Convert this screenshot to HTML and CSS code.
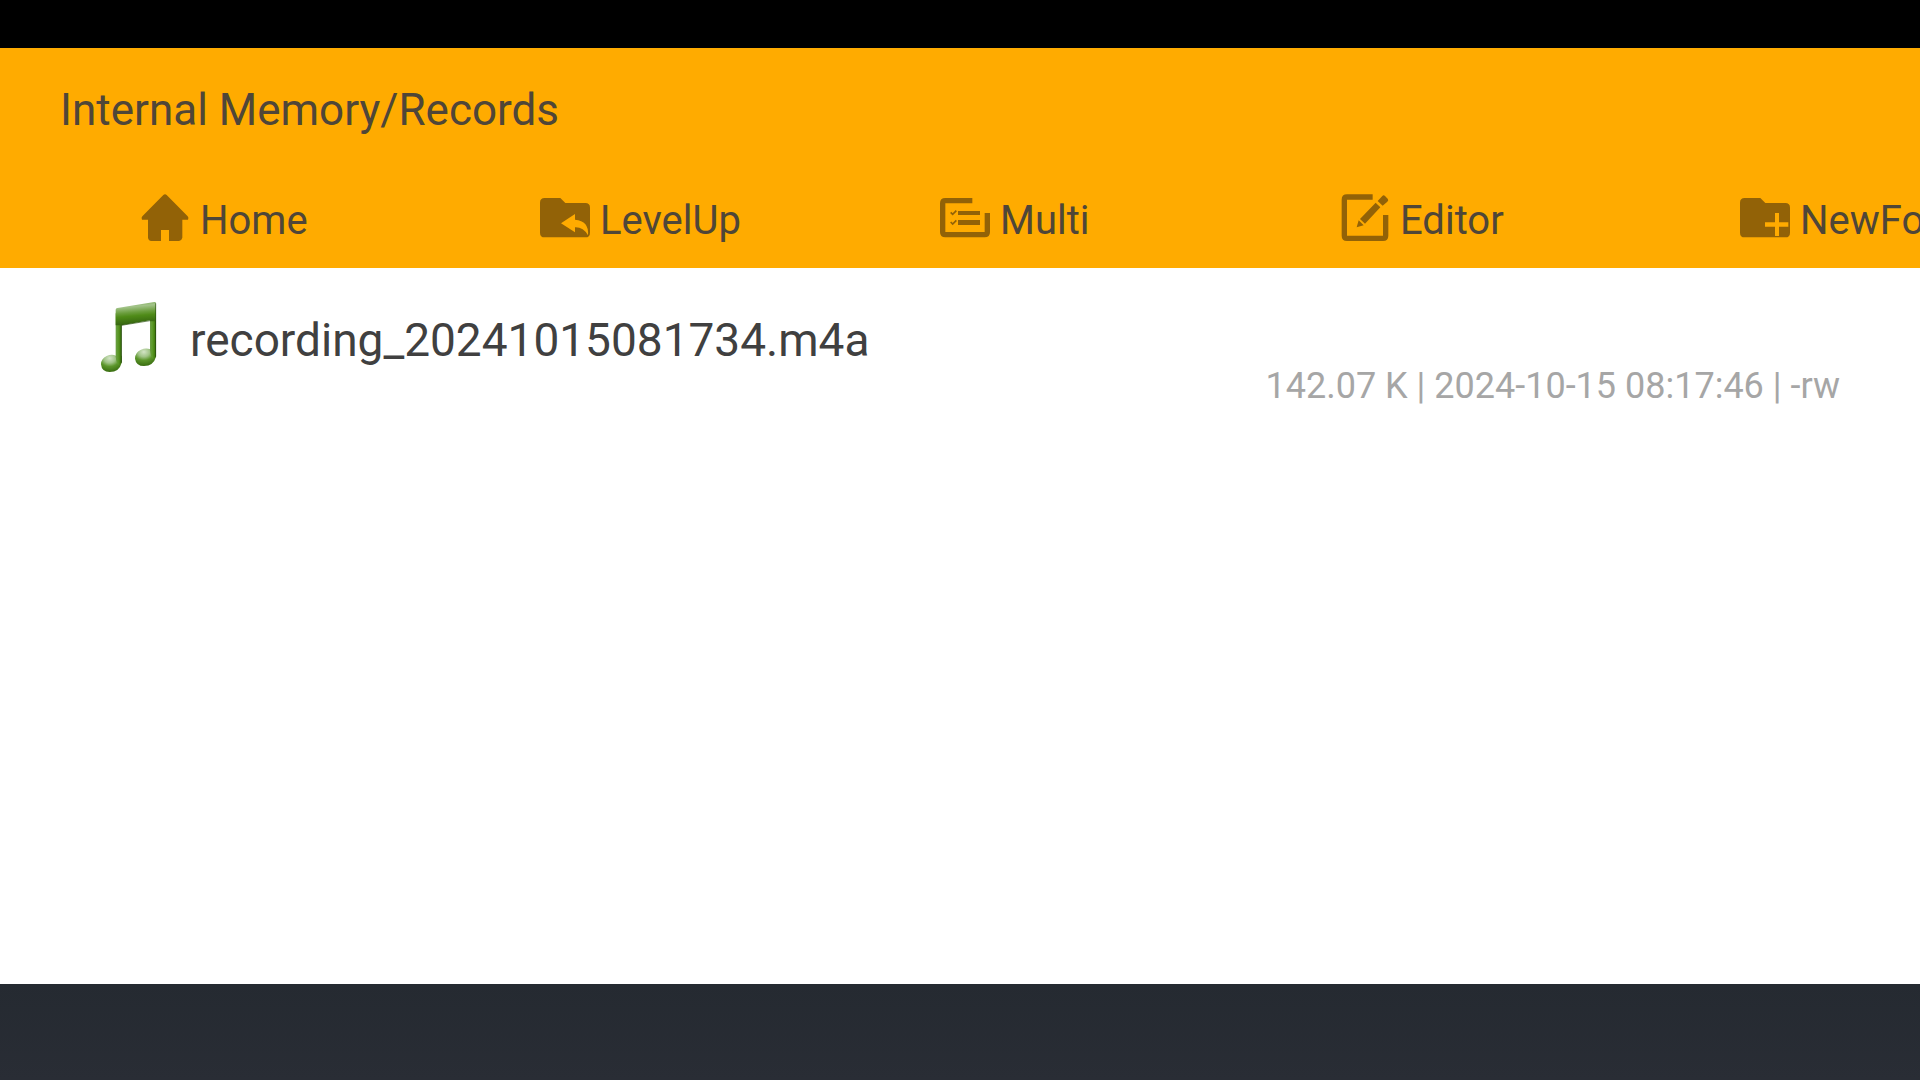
FILE: index.html
```html
<!DOCTYPE html>
<html lang="en">
<head>
    <meta charset="UTF-8">
    <meta name="viewport" content="width=device-width, initial-scale=1.0">
    <title>File Manager</title>
    <link rel="stylesheet" href="styles.css">
</head>
<body>
    <div class="status-bar"></div>

    <header>
        <h1>Internal Memory/Records</h1>
        <nav class="toolbar">
            <button type="button">
                <svg class="icon" viewBox="0 0 150 150" aria-hidden="true">
                    <path d="M70 6Q75 2 80 6L143 70Q147 74 144 80H127V134Q125 143 117 144H87V111H63V144H34Q25 143 24 134V80H6Q3 74 7 70Z"/>
                </svg>
                <span>Home</span>
            </button>
            <button type="button">
                <svg class="icon" viewBox="0 0 150 150" aria-hidden="true">
                    <path fill-rule="evenodd" d="M14 15H61L76 30H136Q150 30 150 44V119Q150 133 136 133H14Q0 133 0 119V29Q0 15 14 15ZM63 91L105 118V103Q130 102 144 127Q148 84 105 80V63Z"/>
                </svg>
                <span>LevelUp</span>
            </button>
            <button type="button">
                <svg class="icon" viewBox="0 0 150 150" aria-hidden="true">
                    <path class="line" d="M97 23H16Q8 23 8 31V117Q8 125 16 125H134Q142 125 142 117V60"/>
                    <path d="M54 54H120V66H54ZM54 81H120V96H54Z"/>
                    <path class="check" d="M32 58L38 64L49 53M32 87L38 93L49 82"/>
                </svg>
                <span>Multi</span>
            </button>
            <button type="button">
                <svg class="icon" viewBox="0 0 150 150" aria-hidden="true">
                    <path class="line" d="M98 12H21Q13 12 13 20V128Q13 136 21 136H129Q137 136 137 128V66"/>
                    <path d="M50 103L56 82L71 97ZM60 78L107 29L121 43L75 92ZM113 24L127 9Q131 5 135 9L143 17Q147 21 142 26L128 38Z"/>
                </svg>
                <span>Editor</span>
            </button>
            <button type="button">
                <svg class="icon" viewBox="0 0 150 150" aria-hidden="true">
                    <path fill-rule="evenodd" d="M14 15H61L76 30H136Q150 30 150 44V119Q150 133 136 133H14Q0 133 0 119V29Q0 15 14 15ZM105 60V88H75V101H105V129H117V101H145V88H117V60Z"/>
                </svg>
                <span>NewFolder</span>
            </button>
        </nav>
    </header>

    <main>
        <ul class="file-list">
            <li>
                <a class="file" href="#">
                    <svg class="file-icon" viewBox="60 120 180 225" aria-hidden="true">
                        <defs>
                            <linearGradient id="beam" x1="0" y1="0" x2="0.15" y2="1">
                                <stop offset="0" stop-color="#6f9f48"/>
                                <stop offset="0.25" stop-color="#a3c48a"/>
                                <stop offset="0.5" stop-color="#6a9d3c"/>
                                <stop offset="0.65" stop-color="#4f8b18"/>
                                <stop offset="1" stop-color="#356410"/>
                            </linearGradient>
                            <linearGradient id="stem" x1="0" y1="0" x2="1" y2="0">
                                <stop offset="0" stop-color="#6b9e45"/>
                                <stop offset="0.4" stop-color="#5c9a28"/>
                                <stop offset="0.75" stop-color="#478312"/>
                                <stop offset="1" stop-color="#28500d"/>
                            </linearGradient>
                            <radialGradient id="head" cx="0.42" cy="0.2" r="0.8">
                                <stop offset="0" stop-color="#d3e4c6"/>
                                <stop offset="0.35" stop-color="#a0c386"/>
                                <stop offset="0.6" stop-color="#5c962b"/>
                                <stop offset="1" stop-color="#396d10"/>
                            </radialGradient>
                        </defs>
                        <path fill="url(#head)" d="M108 287Q95 281 80 288Q63 296 63 313Q65 336 89 336Q118 336 125 308V287Z"/>
                        <path fill="url(#head)" d="M211 268Q198 262 183 269Q165 277 165 296Q168 318 192 318Q221 317 228 290V268Z"/>
                        <path fill="url(#stem)" d="M107 160H125V306Q122 316 116 315Q109 310 107 290Z"/>
                        <path fill="url(#stem)" d="M210 140H228V288Q225 298 219 297Q212 291 210 271Z"/>
                        <path fill="url(#beam)" d="M107 149Q107 145 112 144L223 126Q228 125 228 130V184H210V181L125 196H107Z"/>
                        <path fill="none" stroke="#28500d" stroke-width="2" d="M227 130V290M124 196L210 182M124 196V308"/>
                    </svg>
                    <span class="file-name">recording_20241015081734.m4a</span>
                    <span class="file-info">142.07 K | 2024-10-15 08:17:46 | -rw</span>
                </a>
            </li>
        </ul>
    </main>

    <footer></footer>
</body>
</html>
```
FILE: styles.css
```css
* {
    box-sizing: border-box;
}

body {
    margin: 0;
    min-height: 100vh;
    display: flex;
    flex-direction: column;
    font-family: Roboto, sans-serif;
    background-color: #fff;
}

.status-bar {
    height: 48px;
    background-color: #000;
}

header {
    background-color: #ffab00;
    color: #4f4638;
}

header h1 {
    margin: 0;
    padding: 32px 60px 28px;
    font-size: 44px;
    line-height: 60px;
    font-weight: 400;
}

.toolbar {
    display: flex;
    overflow: hidden;
}

.toolbar button {
    flex: 0 0 400px;
    height: 100px;
    display: flex;
    align-items: center;
    gap: 10px;
    padding: 0 0 0 140px;
    border: none;
    background: none;
    color: inherit;
    font-family: inherit;
    font-size: 40px;
    cursor: pointer;
}

.toolbar span {
    padding-top: 4px;
}

.icon {
    flex: none;
    width: 50px;
    height: 50px;
    fill: #926207;
}

.icon .line {
    fill: none;
    stroke: #926207;
    stroke-width: 16;
}

.icon .check {
    fill: none;
    stroke: #926207;
    stroke-width: 5;
}

main {
    flex: 1;
}

.file-list {
    margin: 0;
    padding: 0;
    list-style: none;
}

.file {
    display: flex;
    align-items: flex-start;
    padding: 32px 80px 20px 100px;
    color: #404040;
    text-decoration: none;
}

.file-icon {
    flex: none;
    width: 60px;
    height: 75px;
    margin-right: 30px;
}

.file-name {
    padding-top: 10px;
    font-size: 46px;
    line-height: 60px;
}

.file-info {
    margin-left: auto;
    padding-top: 65px;
    font-size: 36px;
    line-height: 42px;
    color: #a6a6a6;
}

footer {
    height: 96px;
    background: linear-gradient(#252a31, #292d35);
}
```
